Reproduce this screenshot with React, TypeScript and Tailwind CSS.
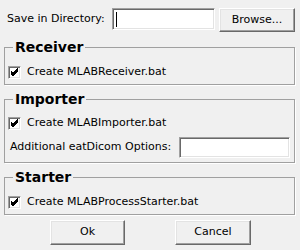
import React from "react";

const font = { fontFamily: '"DejaVu Sans", Verdana, sans-serif' };

function Check() {
  return (
    <span className="flex h-[13px] w-[13px] shrink-0 items-center justify-center border border-t-[#a0a0a0] border-l-[#a0a0a0] border-r-white border-b-white bg-white shadow-[inset_1px_1px_0_#696969,inset_-1px_-1px_0_#e3e3e3]">
      <svg width="11" height="11" viewBox="0 0 11 11">
        <path d="M2 4.5 L4 6.5 L9 1.5 M2 5.5 L4 7.5 L9 2.5 M2 6.5 L4 8.5 L9 3.5" stroke="#000" strokeWidth="1" fill="none" shapeRendering="crispEdges" />
      </svg>
    </span>
  );
}

function CheckRow({ label }: { label: string }) {
  return (
    <div className="flex h-[18px] items-center gap-[6px] pl-[3px] text-[11px] text-black">
      <Check />
      <span>{label}</span>
    </div>
  );
}

function Group({ title, children, className }: { title: string; children: React.ReactNode; className?: string }) {
  return (
    <fieldset className={"border border-[#a0a0a0] shadow-[1px_1px_0_#fff] " + (className ?? "")}>
      <legend className="ml-[8px] px-[2px] text-[14px] font-bold leading-[16px] text-black">{title}</legend>
      {children}
    </fieldset>
  );
}

function Button({ label, w }: { label: string; w: string }) {
  return (
    <button className={"flex items-center justify-center border border-t-white border-l-white border-r-[#696969] border-b-[#696969] bg-[#f0f0f0] text-[11px] text-black shadow-[inset_-1px_-1px_0_#a0a0a0,inset_1px_1px_0_#e3e3e3] " + w}>
      {label}
    </button>
  );
}

export default function App() {
  return (
    <div className="flex h-[250px] w-[300px] flex-col bg-[#f0f0f0] pt-[8px] pl-[4px] pr-[5px]" style={font}>
      <div className="flex h-[24px] items-start">
        <span className="ml-[3px] w-[105px] pt-[4px] text-[11px] leading-[14px] text-black">Save in Directory:</span>
        <div className="flex h-[22px] w-[103px] items-center border border-t-[#a0a0a0] border-l-[#a0a0a0] border-r-white border-b-white bg-white shadow-[inset_1px_1px_0_#696969,inset_-1px_-1px_0_#e3e3e3]">
          <span className="ml-[3px] h-[15px] w-[1px] bg-black" />
        </div>
        <div className="ml-[4px]">
          <Button label="Browse..." w="h-[24px] w-[76px]" />
        </div>
      </div>

      <Group title="Receiver" className="mt-[7px] pb-[3px]">
        <div className="mt-[8px]">
          <CheckRow label="Create MLABReceiver.bat" />
        </div>
      </Group>

      <Group title="Importer" className="mt-[6px] pb-[4px]">
        <div className="mt-[7px]">
          <CheckRow label="Create MLABImporter.bat" />
        </div>
        <div className="mt-[5px] flex h-[21px] items-center">
          <span className="ml-[5px] w-[169px] text-[11px] text-black">Additional eatDicom Options:</span>
          <div className="h-[21px] w-[111px] border border-t-[#a0a0a0] border-l-[#a0a0a0] border-r-white border-b-white bg-white shadow-[inset_1px_1px_0_#696969,inset_-1px_-1px_0_#e3e3e3]" />
        </div>
      </Group>

      <Group title="Starter" className="mt-[6px] pb-[3px]">
        <div className="mt-[8px]">
          <CheckRow label="Create MLABProcessStarter.bat" />
        </div>
      </Group>

      <div className="mt-[5px] flex pl-[46px]">
        <Button label="Ok" w="h-[25px] w-[75px]" />
        <div className="ml-[50px]">
          <Button label="Cancel" w="h-[25px] w-[76px]" />
        </div>
      </div>
    </div>
  );
}
